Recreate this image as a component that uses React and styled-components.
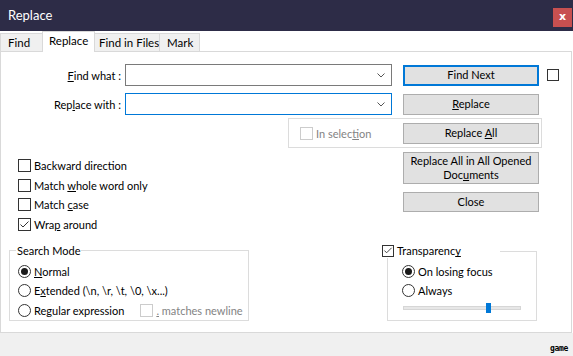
import React from 'react';
import styled, { createGlobalStyle, css } from 'styled-components';

const GlobalStyle = createGlobalStyle`
  html, body { margin: 0; padding: 0; background: #fff; }
  body { font-family: Lato, "Noto Sans", sans-serif; font-size: 11px; color: #000; }
  * { box-sizing: border-box; }
`;

const Window = styled.div`
  width: 573px;
  height: 356px;
  display: flex;
  flex-direction: column;
  background: #fff;
  overflow: hidden;
`;

const TitleBar = styled.div`
  flex: none;
  height: 31px;
  background: #2d2c47;
  color: #fff;
  display: flex;
  align-items: flex-start;
  justify-content: space-between;
`;

const Title = styled.div`
  font-size: 13px;
  line-height: 15px;
  padding: 8px 0 0 8px;
`;

const CloseBtn = styled.div`
  width: 19px;
  height: 19px;
  margin: 8px 1px 0 0;
  background: #c75050;
  color: #fff;
  font: bold 11px/17px "DejaVu Sans", sans-serif;
  text-align: center;
`;

const TabStrip = styled.div`
  flex: none;
  height: 20px;
  display: flex;
  align-items: flex-end;
  position: relative;
  z-index: 1;
`;

const Tab = styled.div`
  width: ${p => p.$w}px;
  height: 18px;
  margin-left: -1px;
  padding-left: ${p => p.$pl}px;
  border: 1px solid #d9d9d9;
  border-bottom: none;
  background: #f0f0f0;
  font-size: 11.5px;
  line-height: 18px;
  white-space: nowrap;
  &:first-child { margin-left: 0; }
  ${p => p.$active && css`
    height: 21px;
    margin-bottom: -1px;
    background: #fff;
    line-height: 18px;
  `}
`;

const Body = styled.div`
  flex: none;
  width: 572px;
  height: 282px;
  border: 1px solid #d9d9d9;
  padding-top: 12px;
  display: flex;
  flex-direction: column;
`;

const FieldRow = styled.div`
  display: flex;
  align-items: center;
  height: 22px;
  margin-top: ${p => p.$mt || 0}px;
`;

const FieldLabel = styled.label`
  width: 120px;
  margin-right: 4px;
  text-align: right;
  white-space: nowrap;
`;

const Combo = styled.div`
  width: 267px;
  height: 22px;
  border: 1px solid ${p => (p.$focused ? '#0078d7' : '#7a7a7a')};
  background: #fff;
  display: flex;
  align-items: center;
  justify-content: flex-end;
  padding-right: 6px;
`;

const Button = styled.button`
  width: 136px;
  height: ${p => p.$h || 21}px;
  margin-left: ${p => p.$ml || 0}px;
  padding: 0;
  background: #e1e1e1;
  border: 1px solid #adadad;
  font-family: inherit;
  font-size: 11px;
  line-height: 14px;
  color: #000;
  ${p => p.$default && css`border: 2px solid #0078d7;`}
`;

const U = styled.span`
  text-decoration: underline;
`;

const Box = styled.span`
  flex: none;
  width: ${p => p.$size || 13}px;
  height: ${p => p.$size || 13}px;
  border: 1px solid ${p => (p.$disabled ? '#cccccc' : '#333')};
  background: #fff;
  display: inline-flex;
  align-items: center;
  justify-content: center;
  margin-left: ${p => p.$ml || 0}px;
`;

const Radio = styled.span`
  flex: none;
  width: 13px;
  height: 13px;
  border: 1px solid #333;
  border-radius: 50%;
  background: #fff;
  display: inline-flex;
  align-items: center;
  justify-content: center;
  &::after {
    content: '';
    width: 7px;
    height: 7px;
    border-radius: 50%;
    background: ${p => (p.$on ? '#1a1a1a' : 'transparent')};
  }
`;

const SelectionGroup = styled.div`
  margin: 3px 0 0 287px;
  width: 254px;
  height: 30px;
  border: 1px solid #dcdcdc;
  display: flex;
  align-items: center;
  justify-content: space-between;
  padding: 0 2px 0 11px;
`;

const Option = styled.div`
  display: flex;
  align-items: center;
  height: 13px;
  line-height: 13px;
  white-space: nowrap;
  color: ${p => (p.$disabled ? '#838383' : '#000')};
  margin-left: ${p => p.$ml || 0}px;
`;

const OptionText = styled.span`
  margin-left: 3px;
`;

const MidRow = styled.div`
  display: flex;
  margin-top: 4px;
`;

const OptionList = styled.div`
  width: 402px;
  padding: 7px 0 0 17px;
  display: flex;
  flex-direction: column;
  gap: 6.67px;
`;

const ButtonCol = styled.div`
  display: flex;
  flex-direction: column;
  gap: 8px;
`;

const BottomRow = styled.div`
  display: flex;
  align-items: flex-start;
  margin-top: 13px;
`;

const Group = styled.fieldset`
  margin: 0 0 0 8px;
  min-width: 0;
  width: 240px;
  height: 77px;
  border: 1px solid #dcdcdc;
  padding: 7px 0 0 8px;
  display: flex;
  flex-direction: column;
  gap: 6.5px;
`;

const Legend = styled.legend`
  margin-left: -2px;
  padding: 0 1px;
  line-height: 14px;
`;

const CheckGroup = styled.div`
  margin-left: 133px;
  width: 155px;
  display: flex;
  flex-direction: column;
`;

const CheckGroupHeader = styled.div`
  position: relative;
  z-index: 1;
  width: 118px;
  height: 14px;
  background: #fff;
  display: flex;
  align-items: center;
`;

const CheckGroupFrame = styled.div`
  margin: -7px 0 0 5px;
  width: 150px;
  height: 70px;
  border: 1px solid #dcdcdc;
  padding: 13px 0 0 14px;
  display: flex;
  flex-direction: column;
  gap: 6.5px;
`;

const SliderTrack = styled.div`
  position: relative;
  width: 118px;
  height: 4px;
  margin: 2px 0 0 1px;
  background: #e7e7e7;
  border: 1px solid #d6d6d6;
`;

const SliderThumb = styled.div`
  position: absolute;
  top: -4px;
  width: 5px;
  height: 10px;
  background: #0078d7;
`;

const Footer = styled.div`
  flex: 1;
  background: #f0f0f0;
  display: flex;
  justify-content: flex-end;
  align-items: flex-end;
  padding: 0 5px 3px 0;
`;

const Watermark = styled.span`
  font: bold 8px/9px "DejaVu Sans Mono", monospace;
  letter-spacing: -0.3px;
  color: #000;
`;

const Chevron = () => (
  <svg width="8" height="5" viewBox="0 0 8 5">
    <path d="M0.5 0.5 L4 4 L7.5 0.5" fill="none" stroke="#555" strokeWidth="1" />
  </svg>
);

const Check = () => (
  <svg width="11" height="11" viewBox="0 0 11 11">
    <path d="M1.5 5.5 L4 8 L9.5 2.5" fill="none" stroke="#333" strokeWidth="1" />
  </svg>
);

const CheckOption = ({ checked, disabled, children, ml }) => (
  <Option $disabled={disabled} $ml={ml}>
    <Box $disabled={disabled}>{checked && <Check />}</Box>
    <OptionText>{children}</OptionText>
  </Option>
);

const RadioOption = ({ on, children }) => (
  <Option>
    <Radio $on={on} />
    <OptionText>{children}</OptionText>
  </Option>
);

export default function App() {
  const transparency = 0.7;
  return (
    <Window>
      <GlobalStyle />
      <TitleBar>
        <Title>Replace</Title>
        <CloseBtn>x</CloseBtn>
      </TitleBar>
      <TabStrip>
        <Tab $w={43} $pl={7}>Find</Tab>
        <Tab $w={53} $pl={6} $active>Replace</Tab>
        <Tab $w={66} $pl={4}>Find in Files</Tab>
        <Tab $w={41} $pl={7}>Mark</Tab>
      </TabStrip>
      <Body>
        <FieldRow>
          <FieldLabel><U>F</U>ind what :</FieldLabel>
          <Combo><Chevron /></Combo>
          <Button $ml={11} $default>Find Next</Button>
          <Box $size={12} $ml={8} />
        </FieldRow>
        <FieldRow $mt={7}>
          <FieldLabel>Rep<U>l</U>ace with :</FieldLabel>
          <Combo $focused><Chevron /></Combo>
          <Button $ml={11}><U>R</U>eplace</Button>
        </FieldRow>
        <SelectionGroup>
          <CheckOption disabled>In selec<U>t</U>ion</CheckOption>
          <Button>Replace <U>A</U>ll</Button>
        </SelectionGroup>
        <MidRow>
          <OptionList>
            <CheckOption>Backward direction</CheckOption>
            <CheckOption>Match <U>w</U>hole word only</CheckOption>
            <CheckOption>Match <U>c</U>ase</CheckOption>
            <CheckOption checked>Wra<U>p</U> around</CheckOption>
          </OptionList>
          <ButtonCol>
            <Button $h={32}>Replace All in All Opened<br />Doc<U>u</U>ments</Button>
            <Button $h={20}>Close</Button>
          </ButtonCol>
        </MidRow>
        <BottomRow>
          <Group>
            <Legend>Search Mode</Legend>
            <RadioOption on><U>N</U>ormal</RadioOption>
            <RadioOption>E<U>x</U>tended {'(\\n, \\r, \\t, \\0, \\x...)'}</RadioOption>
            <Option>
              <Radio />
              <OptionText>Re<U>g</U>ular expression</OptionText>
              <CheckOption disabled ml={16}><U>.</U> matches newline</CheckOption>
            </Option>
          </Group>
          <CheckGroup>
            <CheckGroupHeader>
              <Box $size={12}><Check /></Box>
              <Option as="span"><OptionText>Transparenc<U>y</U></OptionText></Option>
            </CheckGroupHeader>
            <CheckGroupFrame>
              <RadioOption on>On losing focus</RadioOption>
              <RadioOption>Always</RadioOption>
              <SliderTrack>
                <SliderThumb style={{ left: `${Math.round(transparency * 117)}px` }} />
              </SliderTrack>
            </CheckGroupFrame>
          </CheckGroup>
        </BottomRow>
      </Body>
      <Footer>
        <Watermark>game</Watermark>
      </Footer>
    </Window>
  );
}
